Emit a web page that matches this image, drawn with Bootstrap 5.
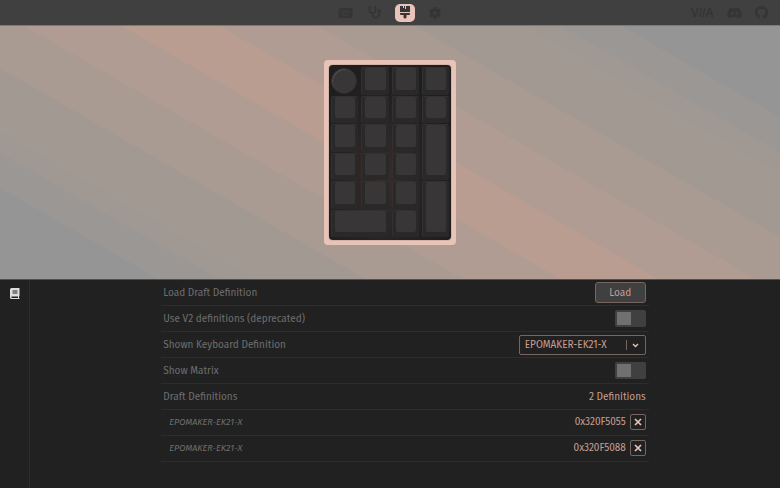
<!DOCTYPE html>
<html lang="en">
<head>
<meta charset="utf-8">
<meta name="viewport" content="width=device-width, initial-scale=1">
<title>VIA – Design</title>
<link href="https://cdn.jsdelivr.net/npm/bootstrap@5.3.0/dist/css/bootstrap.min.css" rel="stylesheet">
<style>
:root { --accent: #e8c4b8; --accent-dim: #c69f92; --ink: #363434; --panel: #212121; --edge: #2d2d2d; --line: #77655f; }
body { background: var(--panel); color: #6f6f6f; font-family: "Fira Sans", "Noto Sans", sans-serif; font-size: 10px; line-height: 16px; }
.topbar { height: 26px; padding: 0 12px; background: #404040; border-bottom: 1px solid #7d7b79; }
.topbar-side { flex: 1 1 0; }
.topbar a { color: var(--ink); }
.mode-link { width: 20px; height: 18px; border-radius: 5px; }
.mode-link.active { background: var(--accent); }
.mode-link svg, .brand-link svg { display: block; fill: currentColor; }
.via-logo { font: bold 12px/16px "Liberation Sans", sans-serif; }
.stage { height: 254px; border-bottom: 1px solid #505050;
  background: linear-gradient(30deg, #949594 13%, #9a9794 13% 18%, #9f9893 18% 21%, #a39993 21% 30%, #a99a92 30% 38%, #b19c93 38% 46%, #b99d91 46% 54%, #b19c93 54% 62%, #a99a92 62% 70%, #a39993 70% 79%, #9f9893 79% 82%, #9a9794 82% 87%, #949594 87%); }
.board-case { padding: 5px; border-radius: 4px; background: var(--accent); }
.board { display: grid; width: 122px; height: 175px; grid-template-columns: repeat(4, 1fr); grid-template-rows: repeat(6, 1fr); column-gap: 3px; row-gap: 1px; padding: 2px 2px 3px; border-radius: 4px; background: radial-gradient(ellipse at 45% 65%, #3a2d28 0, #262222 45%, #1e1e1e 75%); box-shadow: 0 0 1px #1d1d1d; }
.keycap { display: flex; padding: 0 3px 5px; border-radius: 2px; background: #2a2929; border-top: 1px solid #323030; border-left: 1px solid #323030; }
.keycap::before { content: ""; flex: 1; border-radius: 2px; background: #383637; }
.keycap.tall { grid-row: span 2; }
.keycap.wide { grid-column: span 2; }
.knob { width: 26px; height: 26px; margin: 1px 0; border-radius: 50%; background: #383637; border: 1px solid #302f2f; box-shadow: inset 1px 1px #4f4d4d; }
.rail { width: 30px; border-right: 1px solid var(--edge); padding-top: 8px; }
.settings { width: 65%; }
.setting { height: 26px; padding: 0 3px 0 2px; border-bottom: 1px solid var(--edge); }
.setting.draft { padding-bottom: 1px; }
.setting output, .draft-id { color: var(--accent-dim); }
.draft-name { padding-left: 6px; font-size: 9px; }
.btn-load { width: 51px; height: 21px; padding: 0; border: 1px solid var(--line); border-radius: 3px; background: #404040; color: var(--accent-dim); font-size: 10px; line-height: 18px; }
.btn-load:hover { background: #4a4a4a; color: var(--accent); }
.toggle { appearance: none; width: 31px; height: 17px; margin: 0; border-radius: 2px; background: #404040 linear-gradient(#707070, #707070) 2px 2px / 14px 13px no-repeat; }
.toggle:checked { background-color: var(--accent-dim); background-position: 15px 2px; }
.pick { appearance: none; width: 127px; height: 20px; padding: 0 22px 0 5px; border: 1px solid var(--line); border-radius: 2px; color: var(--accent-dim); font-size: 10px; line-height: 16px;
  background: var(--panel) url("data:image/svg+xml,%3Csvg xmlns='http://www.w3.org/2000/svg' width='19' height='18'%3E%3Cpath d='M.5 4v10' stroke='%2377655f'/%3E%3Cpath d='M7 8l2.500 2.500L12 8' fill='none' stroke='%23e8c4b8' stroke-width='1.4'/%3E%3C/svg%3E") right center no-repeat; }
.btn-remove { width: 16px; height: 16px; padding: 0; border: 1px solid var(--line); border-radius: 2px; color: var(--accent); }
.btn-remove svg { display: block; margin: auto; }
</style>
<script src="https://cdn.jsdelivr.net/npm/bootstrap@5.3.0/dist/js/bootstrap.bundle.min.js"></script>
</head>
<body class="min-vh-100 d-flex flex-column">
<header class="topbar d-flex align-items-center">
  <div class="topbar-side"></div>
  <nav class="d-flex align-items-center" style="gap:10px" aria-label="Modes">
    <a class="mode-link d-flex align-items-center justify-content-center" href="#configure" aria-label="Configure"><svg width="15" height="12" viewBox="0 0 15 12"><rect x=".5" y="1" width="14" height="10" rx="1.5"/><path d="M2.500 4h10M2.500 6h10M4.500 8.500h6" stroke="#474545" stroke-dasharray="1 1" fill="none"/></svg></a>
    <a class="mode-link d-flex align-items-center justify-content-center" href="#test" aria-label="Key tester"><svg width="14" height="13" viewBox="0 0 14 13"><path d="M3 1H1.500v3.200a3 3 0 0 0 6 0V1H6M4.500 7v1.500a3.300 3.300 0 0 0 6.700 0V6.500" style="fill:none" stroke="currentColor" stroke-width="1.700"/><circle cx="11.200" cy="5" r="1.900"/></svg></a>
    <a class="mode-link active d-flex align-items-center justify-content-center" href="#design" aria-label="Design" aria-current="page"><svg width="10" height="13" viewBox="0 0 10 13"><path d="M0 0h3v2h1V0h1v3h1V0h4v6H0zM0 7h10v1a1 1 0 0 1-1 1H6.500v2a1.500 1.500 0 0 1-3 0V9H1a1 1 0 0 1-1-1z"/></svg></a>
    <a class="mode-link d-flex align-items-center justify-content-center" href="#settings" aria-label="Settings"><svg width="12" height="12" viewBox="0 0 12 12"><circle cx="6" cy="6" r="3.200" style="fill:none" stroke="currentColor" stroke-width="3"/><path d="M6 0v2.500M6 9.500V12M.8 3l2.200 1.300M9 7.700 11.200 9M.8 9 3 7.700M9 4.300 11.200 3" stroke="currentColor" stroke-width="3"/></svg></a>
  </nav>
  <div class="topbar-side d-flex align-items-center justify-content-end" style="gap:13px">
    <a class="via-logo text-decoration-none" href="#via" aria-label="VIA">V//A</a>
    <a class="brand-link" href="#discord" aria-label="Discord"><svg width="15" height="12" viewBox="0 0 15 12"><path fill-rule="evenodd" d="M5.500.5 5 1.300h5L9.500.5l3 1C14 4 15 6.500 14.600 9.600 13.500 10.700 12 11.400 11 11.500l-.8-1.400H4.800L4 11.500C3 11.400 1.500 10.700.4 9.600 0 6.500 1 4 2.500 1.500zM5.200 5a1.400 1.500 0 1 0 0 3 1.400 1.500 0 1 0 0-3zM9.800 5a1.400 1.500 0 1 0 0 3 1.400 1.500 0 1 0 0-3z"/></svg></a>
    <a class="brand-link" href="#github" aria-label="GitHub"><svg width="13" height="13" viewBox="0 0 16 16"><path d="M8 0C3.580 0 0 3.580 0 8c0 3.540 2.290 6.530 5.470 7.590.4.070.55-.17.55-.38 0-.19-.01-.82-.01-1.490-2.010.37-2.530-.49-2.690-.94-.09-.23-.48-.94-.82-1.130-.28-.15-.68-.52-.01-.53.63-.01 1.080.58 1.230.82.72 1.210 1.870.87 2.330.66.07-.52.28-.87.51-1.070-1.780-.2-3.640-.89-3.640-3.950 0-.87.31-1.590.82-2.150-.08-.2-.36-1.020.08-2.120 0 0 .67-.21 2.200.82a7.600 7.600 0 0 1 4 0c1.530-1.040 2.200-.82 2.200-.82.44 1.100.16 1.920.08 2.120.51.56.82 1.270.82 2.150 0 3.070-1.870 3.750-3.650 3.950.29.25.54.73.54 1.480 0 1.070-.01 1.930-.01 2.200 0 .21.15.46.55.38A8.010 8.010 0 0 0 16 8c0-4.420-3.580-8-8-8z"/></svg></a>
  </div>
</header>

<section class="stage d-flex align-items-center justify-content-center" aria-label="Keyboard preview">
  <div class="board-case"><div class="board">
    <div class="knob"></div><div class="keycap"></div><div class="keycap"></div><div class="keycap"></div>
    <div class="keycap"></div><div class="keycap"></div><div class="keycap"></div><div class="keycap"></div>
    <div class="keycap"></div><div class="keycap"></div><div class="keycap"></div><div class="keycap tall"></div>
    <div class="keycap"></div><div class="keycap"></div><div class="keycap"></div>
    <div class="keycap"></div><div class="keycap"></div><div class="keycap"></div><div class="keycap tall"></div>
    <div class="keycap wide"></div><div class="keycap"></div>
  </div></div>
</section>

<main class="d-flex flex-grow-1">
  <aside class="rail d-flex justify-content-center">
    <a href="#definitions" aria-label="Definitions"><svg class="d-block" width="10" height="11" viewBox="0 0 10 11"><path fill="#dedede" fill-rule="evenodd" d="M1.500 0H9.500v8l-.5.500V10h.5v1h-8A1.500 1.500 0 0 1 0 9.500v-8A1.500 1.500 0 0 1 1.500 0zM2.500 2.500v1h5v-1zM2.500 4.500v1h5v-1zM1.500 8.500V10H8V8.500z"/></svg></a>
  </aside>
  <div class="flex-grow-1">
    <div class="settings mx-auto">
      <div class="setting d-flex align-items-center justify-content-between"><span>Load Draft Definition</span><button class="btn btn-load" type="button">Load</button></div>
      <div class="setting d-flex align-items-center justify-content-between"><label for="v2">Use V2 definitions (deprecated)</label><input class="toggle" id="v2" type="checkbox" role="switch"></div>
      <div class="setting d-flex align-items-center justify-content-between"><label for="shown">Shown Keyboard Definition</label><select class="pick" id="shown"><option>EPOMAKER-EK21-X</option></select></div>
      <div class="setting d-flex align-items-center justify-content-between"><label for="matrix">Show Matrix</label><input class="toggle" id="matrix" type="checkbox" role="switch"></div>
      <div class="setting d-flex align-items-center justify-content-between"><span>Draft Definitions</span><output>2 Definitions</output></div>
      <div class="setting draft d-flex align-items-center"><em class="draft-name me-auto">EPOMAKER-EK21-X</em><span class="draft-id me-1">0x320F5055</span><button class="btn btn-remove" type="button" aria-label="Remove 0x320F5055"><svg width="8" height="8" viewBox="0 0 8 8"><path d="m1 1 6 6M7 1 1 7" stroke="currentColor" stroke-width="1.700"/></svg></button></div>
      <div class="setting draft d-flex align-items-center"><em class="draft-name me-auto">EPOMAKER-EK21-X</em><span class="draft-id me-1">0x320F5088</span><button class="btn btn-remove" type="button" aria-label="Remove 0x320F5088"><svg width="8" height="8" viewBox="0 0 8 8"><path d="m1 1 6 6M7 1 1 7" stroke="currentColor" stroke-width="1.700"/></svg></button></div>
    </div>
  </div>
</main>
</body>
</html>
